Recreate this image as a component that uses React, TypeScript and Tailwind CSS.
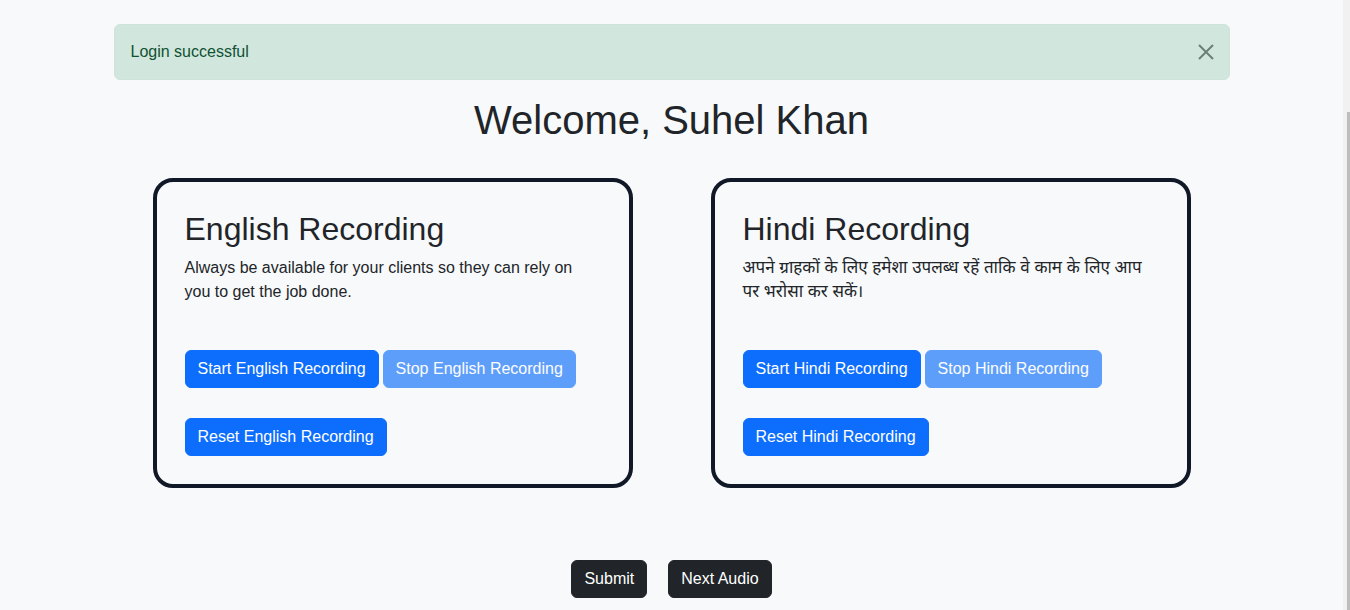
import React from "react";

function RecordingCard({
  title,
  lines,
  lang,
  textClass,
}: {
  title: string;
  lines: string[];
  lang: string;
  textClass: string;
}) {
  return (
    <div className="w-[480px] rounded-[20px] border-4 border-[#111827] p-7">
      <h2 className="text-[32px] leading-[38px] font-normal text-[#212529]">{title}</h2>
      <p className={`mt-2 leading-6 text-[#212529] ${textClass}`}>
        {lines.map((l, i) => (
          <span key={i} className="block whitespace-nowrap">
            {l}
          </span>
        ))}
      </p>
      <div className="mt-[46px] flex gap-1">
        <button className="h-[38px] rounded-[6px] border border-[#0d6efd] bg-[#0d6efd] px-3 text-[16px] leading-6 text-white">
          Start {lang} Recording
        </button>
        <button className="h-[38px] rounded-[6px] border border-[#0d6efd] bg-[#0d6efd] px-3 text-[16px] leading-6 text-white opacity-65">
          Stop {lang} Recording
        </button>
      </div>
      <div className="mt-[30px] flex">
        <button className="h-[38px] rounded-[6px] border border-[#0d6efd] bg-[#0d6efd] px-3 text-[16px] leading-6 text-white">
          Reset {lang} Recording
        </button>
      </div>
    </div>
  );
}

export default function App() {
  return (
    <div className="relative h-[610px] overflow-hidden bg-[#f8f9fa] pr-[7px] font-['Liberation_Sans','Noto_Sans',sans-serif] text-[#212529]">
      <div className="mx-auto w-[1140px] px-3">
        <div className="relative mt-6 flex h-[56px] items-center rounded-[6px] border border-[#cfe4d9] bg-[#d1e7dd] pl-4 text-[16px] leading-6 text-[#0f5132]">
          <span>Login successful</span>
          <button className="absolute right-[15px] top-[19px] h-4 w-4" aria-label="Close">
            <svg width="16" height="16" viewBox="0 0 16 16" className="block">
              <path d="M1 1 L15 15 M15 1 L1 15" stroke="#6b8077" strokeWidth="2" strokeLinecap="butt" />
            </svg>
          </button>
        </div>

        <h1 className="mt-4 text-center text-[40px] leading-[48px] font-normal">Welcome, Suhel Khan</h1>

        <div className="mt-[34px] flex justify-around">
          <RecordingCard
            title="English Recording"
            lang="English"
            textClass="text-[16px]"
            lines={["Always be available for your clients so they can rely on", "you to get the job done."]}
          />
          <RecordingCard
            title="Hindi Recording"
            lang="Hindi"
            textClass="text-[17px]"
            lines={["अपने ग्राहकों के लिए हमेशा उपलब्ध रहें ताकि वे काम के लिए आप", "पर भरोसा कर सकें।"]}
          />
        </div>

        <div className="mt-[72px] flex justify-center gap-[21px]">
          <button className="h-[38px] rounded-[6px] border border-[#212529] bg-[#212529] px-3 text-[16px] leading-6 text-white">
            Submit
          </button>
          <button className="h-[38px] rounded-[6px] border border-[#212529] bg-[#212529] px-3 text-[16px] leading-6 text-white">
            Next Audio
          </button>
        </div>
      </div>

      <div className="absolute right-0 top-0 h-[610px] w-[7px] bg-[#f1f1f1]">
        <div className="ml-[4px] mt-[112px] h-[498px] w-[3px] bg-[#bdbdbd]" />
      </div>
    </div>
  );
}
